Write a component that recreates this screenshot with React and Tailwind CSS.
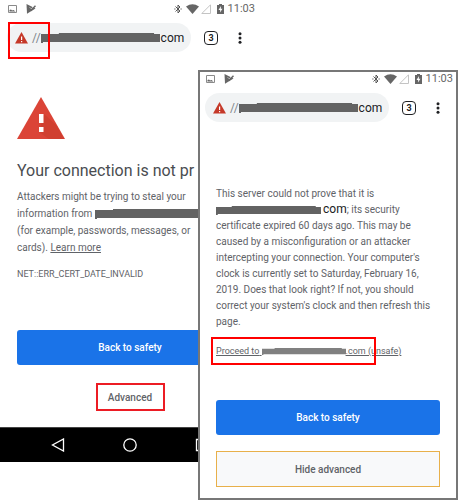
const TriangleAlert = ({ className }) => (
  <svg viewBox="0 0 48 42" className={className} aria-hidden="true">
    <path d="M24 0 48 42H0Z" fill="#db4437" />
    <path d="M27 17 40 29 47 42H32L22 35Z" fill="#c53929" opacity="0.5" />
    <path d="M22 17h4.500v9H22zM22 30h4.500v5H22z" fill="#fff" />
  </svg>
);

const SmallAlert = () => (
  <svg viewBox="0 0 13 12" className="h-3 w-[13px] shrink-0" aria-hidden="true">
    <path d="M6.5 0 13 11.500H0Z" fill="#c53929" />
    <path d="M6 4.5h1.2v3.5H6zM6 9h1.2v1.3H6z" fill="#fff" />
  </svg>
);

// Marker stroke that hides the host name
const Scribble = ({ className, color = "#636363" }) => (
  <svg
    viewBox="0 0 120 10"
    preserveAspectRatio="none"
    className={className}
    aria-hidden="true"
  >
    <path d="M0 1H18V0H114V1H120V9H2V10H0Z" fill={color} />
  </svg>
);

const StatusBar = () => (
  <div className="flex h-[18px] items-center pr-[5px] pl-2 text-[#666]">
    <svg viewBox="0 0 9 8" className="h-2 w-[9px]" aria-hidden="true">
      <path d="M.5.5h8v7h-8z" fill="none" stroke="#8a8a8a" />
      <path d="M1.500 6.500V5L3 4.500l1 1L5.500 5 7.500 6.500Z" fill="currentColor" />
    </svg>
    <svg viewBox="0 0 10 10" className="ml-[9px] size-[10px]" aria-hidden="true">
      <path d="M.5 0 9.500 4.500 1 9.800Z" fill="currentColor" />
      <path d="M3.500 3.200 5.200 5 9 1" fill="none" stroke="#fff" strokeWidth=".7" />
      <path d="M3 4 5.200 6.200 9.500 1.800" fill="none" stroke="currentColor" strokeWidth="1.500" />
    </svg>
    <svg viewBox="0 0 8 10" className="ml-auto h-[10px] w-2" aria-hidden="true">
      <path
        d="M1.500 2.500 6 7 4 9V1l2 2-4.500 4.500M.3 5h1.200M6.500 5h1.200"
        fill="none"
        stroke="#555"
      />
    </svg>
    <svg viewBox="0 0 13 10" className="ml-1 h-[10px] w-[13px]" aria-hidden="true">
      <path d="M0 2.500Q6.500-2 13 2.500L6.500 10Z" fill="currentColor" />
    </svg>
    <svg viewBox="0 0 10 10" className="ml-0.5 size-[10px]" aria-hidden="true">
      <path d="M9.500.8V9.500H.8Z" fill="none" stroke="#c4c4c4" />
    </svg>
    <svg viewBox="0 0 7 10" className="ml-1.5 h-[10px] w-[7px]" aria-hidden="true">
      <path d="M2 0h3v1h2v9H0V1h2Z" fill="currentColor" />
      <path d="M4 2 1.500 6H3.200L3 8.500 5.500 4.800H3.800Z" fill="#fff" />
    </svg>
    <span className="ml-1 text-[11px] leading-4">11:03</span>
  </div>
);

const AddressBar = () => (
  <div className="mt-[5px] flex items-center pl-[7px]">
    <div className="flex h-[29px] w-[184px] items-center rounded-full bg-[#f1f3f4] pl-2">
      <SmallAlert />
      <span className="ml-1 text-xs text-[#80868b]">//</span>
      <Scribble className="h-[10px] w-[119px]" />
      <span className="ml-px text-xs text-[#202124]">com</span>
    </div>
    <button
      aria-label="Tabs"
      className="ml-[13px] size-[14px] rounded-[4px] border border-[#202124] text-center text-[9px] leading-3 font-bold text-[#202124]"
    >
      3
    </button>
    <button aria-label="More" className="ml-5">
      <svg viewBox="0 0 4 12" className="h-3 w-1" fill="#202124">
        <circle cx="2" cy="1.700" r="1.500" />
        <circle cx="2" cy="6" r="1.500" />
        <circle cx="2" cy="10.300" r="1.500" />
      </svg>
    </button>
  </div>
);

const SafetyButton = () => (
  <button className="h-[35px] w-full rounded-[3px] bg-[#1a73e8] text-[10px] font-medium text-white">
    Back to safety
  </button>
);

const NavBar = () => (
  <div className="flex h-[35px] items-center justify-between border-t border-[#444] bg-black px-[51px]">
    <svg viewBox="0 0 14 14" className="size-[14px]" fill="none" stroke="#fff" strokeWidth="1.300">
      <path d="M12.500 1V13L1.500 7Z" />
    </svg>
    <svg viewBox="0 0 14 14" className="size-[14px]" fill="none" stroke="#fff" strokeWidth="1.300">
      <circle cx="7" cy="7" r="6.200" />
    </svg>
    <svg viewBox="0 0 14 14" className="size-[14px]" fill="none" stroke="#fff" strokeWidth="1.300">
      <path d="M1.500 1.500h11v11h-11z" />
    </svg>
  </div>
);

const WarningScreen = () => (
  <div className="w-[260px] bg-white">
    <StatusBar />
    <AddressBar />
    <div className="px-[17px] pt-[45px]">
      <TriangleAlert className="h-[42px] w-12" />
      <h1 className="mt-5 text-base leading-6 whitespace-nowrap text-[#4a4d51]">
        Your connection is not pr
      </h1>
      <p className="mt-[5px] text-[10px] leading-[17px] whitespace-nowrap text-[#5f6368]">
        Attackers might be trying to steal your
        <br />
        information from{" "}
        <Scribble className="inline-block h-[10px] w-[120px] align-middle" />
        <br />
        (for example, passwords, messages, or
        <br />
        cards).{" "}
        <a href="#learn" className="underline">
          Learn more
        </a>
      </p>
      <p className="mt-[9px] text-[9px] leading-[18px] text-[#5f6368]">
        NET::ERR_CERT_DATE_INVALID
      </p>
      <div className="mt-[47px]">
        <SafetyButton />
      </div>
      <button className="mx-auto mt-[18px] block h-7 w-[69px] border-2 border-[#ec1c24] text-[10px] font-medium text-[#5f6368]">
        Advanced
      </button>
    </div>
    <div className="mt-4">
      <NavBar />
    </div>
  </div>
);

const AdvancedScreen = () => (
  <div className="w-[260px] bg-white pb-[13px] outline-2 -outline-offset-2 outline-[#777]">
    <StatusBar />
    <AddressBar />
    <div className="px-[18px] pt-16">
      <p className="text-[10px] leading-4 whitespace-nowrap text-[#5f6368]">
        This server could not prove that it is
        <br />
        <Scribble className="mr-0.5 inline-block h-[9px] w-[105px] align-middle" />
        <span className="text-xs leading-none text-[#202124]">com</span>; its security
        <br />
        certificate expired 60 days ago. This may be
        <br />
        caused by a misconfiguration or an attacker
        <br />
        intercepting your connection. Your computer's
        <br />
        clock is currently set to Saturday, February 16,
        <br />
        2019. Does that look right? If not, you should
        <br />
        correct your system's clock and then refresh this
        <br />
        page.
      </p>
      <div className="relative mt-[13px] text-[9px] leading-4 whitespace-nowrap">
        <a href="#proceed" className="text-[#5f6368] underline">
          Proceed to{" "}
          <Scribble className="inline-block h-[7px] w-[84px] align-middle" color="#808080" />
          .com (unsafe)
        </a>
        <span className="absolute -top-1.5 -left-[5px] h-7 w-[165px] border-2 border-[#f00]" />
      </div>
      <div className="mt-[41px]">
        <SafetyButton />
      </div>
      <button className="mt-4 h-9 w-full border border-[#e8b04a] bg-[#f8f9fa] text-[10px] font-medium text-[#5f6368]">
        Hide advanced
      </button>
    </div>
  </div>
);

export default function App() {
  return (
    <main className="relative min-h-screen overflow-hidden bg-white font-[Roboto,sans-serif]">
      <WarningScreen />
      <span className="absolute top-[22px] left-2 h-[37px] w-[42px] border-2 border-[#f00]" />
      <div className="absolute top-[70px] left-[198px]">
        <AdvancedScreen />
      </div>
    </main>
  );
}
